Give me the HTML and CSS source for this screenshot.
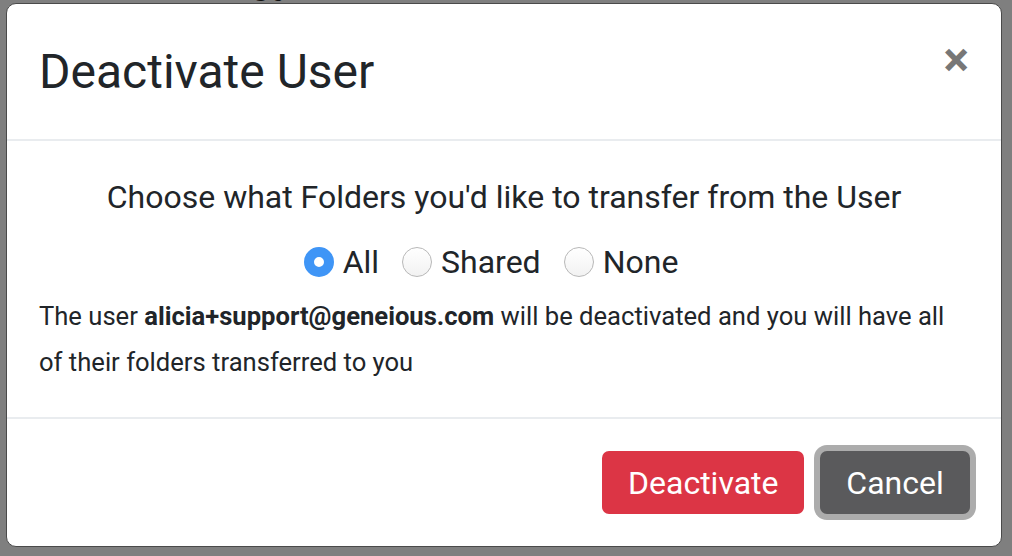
FILE: index.html
```html
<!DOCTYPE html>
<html lang="en">
<head>
<meta charset="utf-8">
<title>Deactivate User</title>
<link rel="stylesheet" href="styles.css">
</head>
<body>
<div class="backdrop-row" aria-hidden="true">
  <span class="bg-cell c1">alicia</span>
  <span class="bg-cell c2">@geneious</span>
  <span class="bg-cell c3">Active</span>
  <span class="bg-cell c4">Admin</span>
</div>
<div class="stage">
  <div class="modal">
    <div class="modal-header">
      <h5 class="modal-title">Deactivate User</h5>
      <button class="close" type="button" aria-label="Close">&times;</button>
    </div>
    <div class="modal-body">
      <p class="choose">Choose what Folders you'd like to transfer from the User</p>
      <div class="radios">
        <label class="radio"><input type="radio" name="folders" checked><span>All</span></label>
        <label class="radio"><input type="radio" name="folders"><span>Shared</span></label>
        <label class="radio"><input type="radio" name="folders"><span>None</span></label>
      </div>
      <p class="info">The user <strong>alicia+support@geneious.com</strong> will be deactivated and you will have all of their folders transferred to you</p>
    </div>
    <div class="modal-footer">
      <button class="btn btn-danger" type="button">Deactivate</button>
      <button class="btn btn-secondary" type="button">Cancel</button>
    </div>
  </div>
</div>
</body>
</html>
```
FILE: styles.css
```css
html, body {
  margin: 0;
  padding: 0;
  height: 100%;
}
body {
  background: #7f7f7f;
  font-family: Roboto, "Liberation Sans", Arial, sans-serif;
  color: #212529;
  overflow: hidden;
  position: relative;
}
.backdrop-row {
  position: absolute;
  top: -24px;
  left: 0;
  width: 100%;
  height: 24px;
  font-size: 24px;
  line-height: 24px;
  color: #111;
}
.bg-cell { position: absolute; top: 0; }
.c1 { left: 100px; }
.c2 { left: 250px; }
.c3 { left: 462px; }
.c4 { left: 860px; }
.stage {
  position: relative;
  padding: 3px 10px 0 6px;
}
.modal {
  background: #fff;
  border: 1px solid #4a4a4a;
  border-radius: 10px;
  height: 542px;
  display: flex;
  flex-direction: column;
  overflow: hidden;
}
.modal-header {
  height: 135px;
  flex: none;
  display: flex;
  align-items: center;
  justify-content: space-between;
  padding: 0 32px;
  border-bottom: 2px solid #e9ecef;
}
.modal-title {
  margin: 0;
  font-size: 48px;
  font-weight: 400;
  line-height: 1.2;
  color: #212529;
}
.close {
  border: 0;
  background: transparent;
  padding: 0;
  margin: -24px 0 0 0;
  font-family: Roboto, "Liberation Sans", Arial, sans-serif;
  font-size: 48px;
  font-weight: 700;
  line-height: 1;
  color: #777;
  cursor: pointer;
}
.modal-body {
  flex: 1;
  padding: 34px 32px 0;
  display: flex;
  flex-direction: column;
}
.choose {
  margin: 0;
  text-align: center;
  font-size: 32px;
  line-height: 44px;
}
.radios {
  margin-top: 28px;
  display: flex;
  justify-content: center;
  gap: 23px;
  height: 30px;
  padding-right: 26px;
}
.radio {
  display: flex;
  align-items: center;
  gap: 9px;
  font-size: 32px;
  line-height: 30px;
}
.radio input {
  appearance: none;
  -webkit-appearance: none;
  margin: 0;
  width: 30px;
  height: 30px;
  border-radius: 50%;
  border: 1px solid #b8b8b8;
  background: linear-gradient(#ffffff, #f2f2f2);
  box-sizing: border-box;
  flex: none;
}
.radio input:checked {
  border: 10px solid #3f95f6;
  background: #fff;
}
.info {
  margin: 16px 0 0;
  font-size: 25.6px;
  line-height: 46px;
}
.info strong { font-weight: 700; }
.modal-footer {
  flex: none;
  height: 127px;
  border-top: 2px solid #e9ecef;
  display: flex;
  align-items: center;
  justify-content: flex-end;
  gap: 16px;
  padding: 0 31px;
}
.btn {
  font-family: Roboto, "Liberation Sans", Arial, sans-serif;
  font-size: 32px;
  line-height: 1;
  height: 63px;
  border: 0;
  border-radius: 7px;
  color: #fff;
  padding: 0 26px;
  cursor: pointer;
}
.btn-danger {
  background: #dc3545;
  width: 202px;
}
.btn-secondary {
  background: #5a5a5c;
  width: 150px;
  box-shadow: 0 0 0 6px #acacac;
}
```
